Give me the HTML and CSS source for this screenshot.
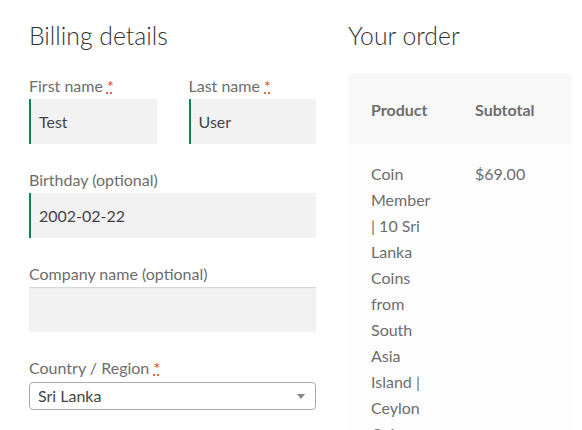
FILE: index.html
```html
<!DOCTYPE html>
<html lang="en">
<head>
<meta charset="utf-8">
<title>Checkout</title>
<link rel="stylesheet" href="styles.css">
</head>
<body>
<div class="checkout">
  <section class="billing">
    <h3 class="title">Billing details</h3>
    <div class="row row-split">
      <div class="field">
        <label class="label">First name <abbr class="req" title="required">*</abbr></label>
        <div class="input valid">Test</div>
      </div>
      <div class="field">
        <label class="label">Last name <abbr class="req" title="required">*</abbr></label>
        <div class="input valid">User</div>
      </div>
    </div>
    <div class="field">
      <label class="label">Birthday <span>(optional)</span></label>
      <div class="input valid">2002-02-22</div>
    </div>
    <div class="field">
      <label class="label">Company name <span>(optional)</span></label>
      <div class="input"></div>
    </div>
    <div class="field">
      <label class="label">Country / Region <abbr class="req" title="required">*</abbr></label>
      <div class="select">
        <span>Sri Lanka</span>
        <span class="arrow"></span>
      </div>
    </div>
  </section>
  <section class="order">
    <h3 class="title">Your order</h3>
    <table class="order-table">
      <colgroup><col class="c1"><col class="c2"></colgroup>
      <thead>
        <tr><th>Product</th><th>Subtotal</th></tr>
      </thead>
      <tbody>
        <tr>
          <td>Coin Member | 10 Sri Lanka Coins from South Asia Island | Ceylon Coins</td>
          <td>$69.00</td>
        </tr>
      </tbody>
    </table>
  </section>
</div>
</body>
</html>
```
FILE: styles.css
```css
* { box-sizing: border-box; }
html, body { margin: 0; padding: 0; background: #fff; }
body {
  font-family: "Lato", "Liberation Sans", sans-serif;
  font-size: 16px;
  line-height: 26px;
  color: #6d6d6d;
}
.checkout {
  display: flex;
  gap: 32px;
  padding: 19px 0 0 29px;
  width: 572px;
}
.billing { width: 287px; flex: none; }
.order { width: 224px; flex: none; }
.title {
  margin: 0 0 20px;
  font-size: 24.75px;
  line-height: 34px;
  font-weight: 300;
  color: #333;
}
.row-split { display: flex; gap: 32px; }
.row-split .field { flex: 1; }
.field { margin-bottom: 23px; }
.label { display: block; line-height: 26px; }
.req {
  color: #e2401c;
  text-decoration: underline dotted;
  border: 0;
}
.input {
  height: 45px;
  background: #f2f2f2;
  color: #43454b;
  padding: 0 10px;
  line-height: 45px;
  box-shadow: inset 0 1px 1px rgba(0,0,0,.125);
}
.input.valid { box-shadow: inset 2px 0 0 #0f834d; }
.select {
  margin-top: 1px;
  height: 28px;
  border: 1px solid #aaa;
  border-radius: 4px;
  display: flex;
  align-items: center;
  justify-content: space-between;
  padding: 0 8px 0 8px;
  color: #444;
  line-height: 26px;
}
.arrow {
  width: 0; height: 0;
  border-left: 4px solid transparent;
  border-right: 4px solid transparent;
  border-top: 5px solid #888;
  margin-right: 2px;
}
.order-table {
  width: 224px;
  border-collapse: collapse;
  table-layout: fixed;
}
.c1 { width: 104px; }
.c2 { width: 120px; }
.order-table th {
  background: #f8f8f8;
  text-align: left;
  font-weight: 700;
  color: #6d6d6d;
  padding: 24px 0 21px 23px;
}
.order-table td {
  background: #fdfdfd;
  vertical-align: top;
  padding: 16px 0 0 23px;
  border-top: 1px solid #fff;
}
.order-table td:first-child { padding-right: 25px; }
```
